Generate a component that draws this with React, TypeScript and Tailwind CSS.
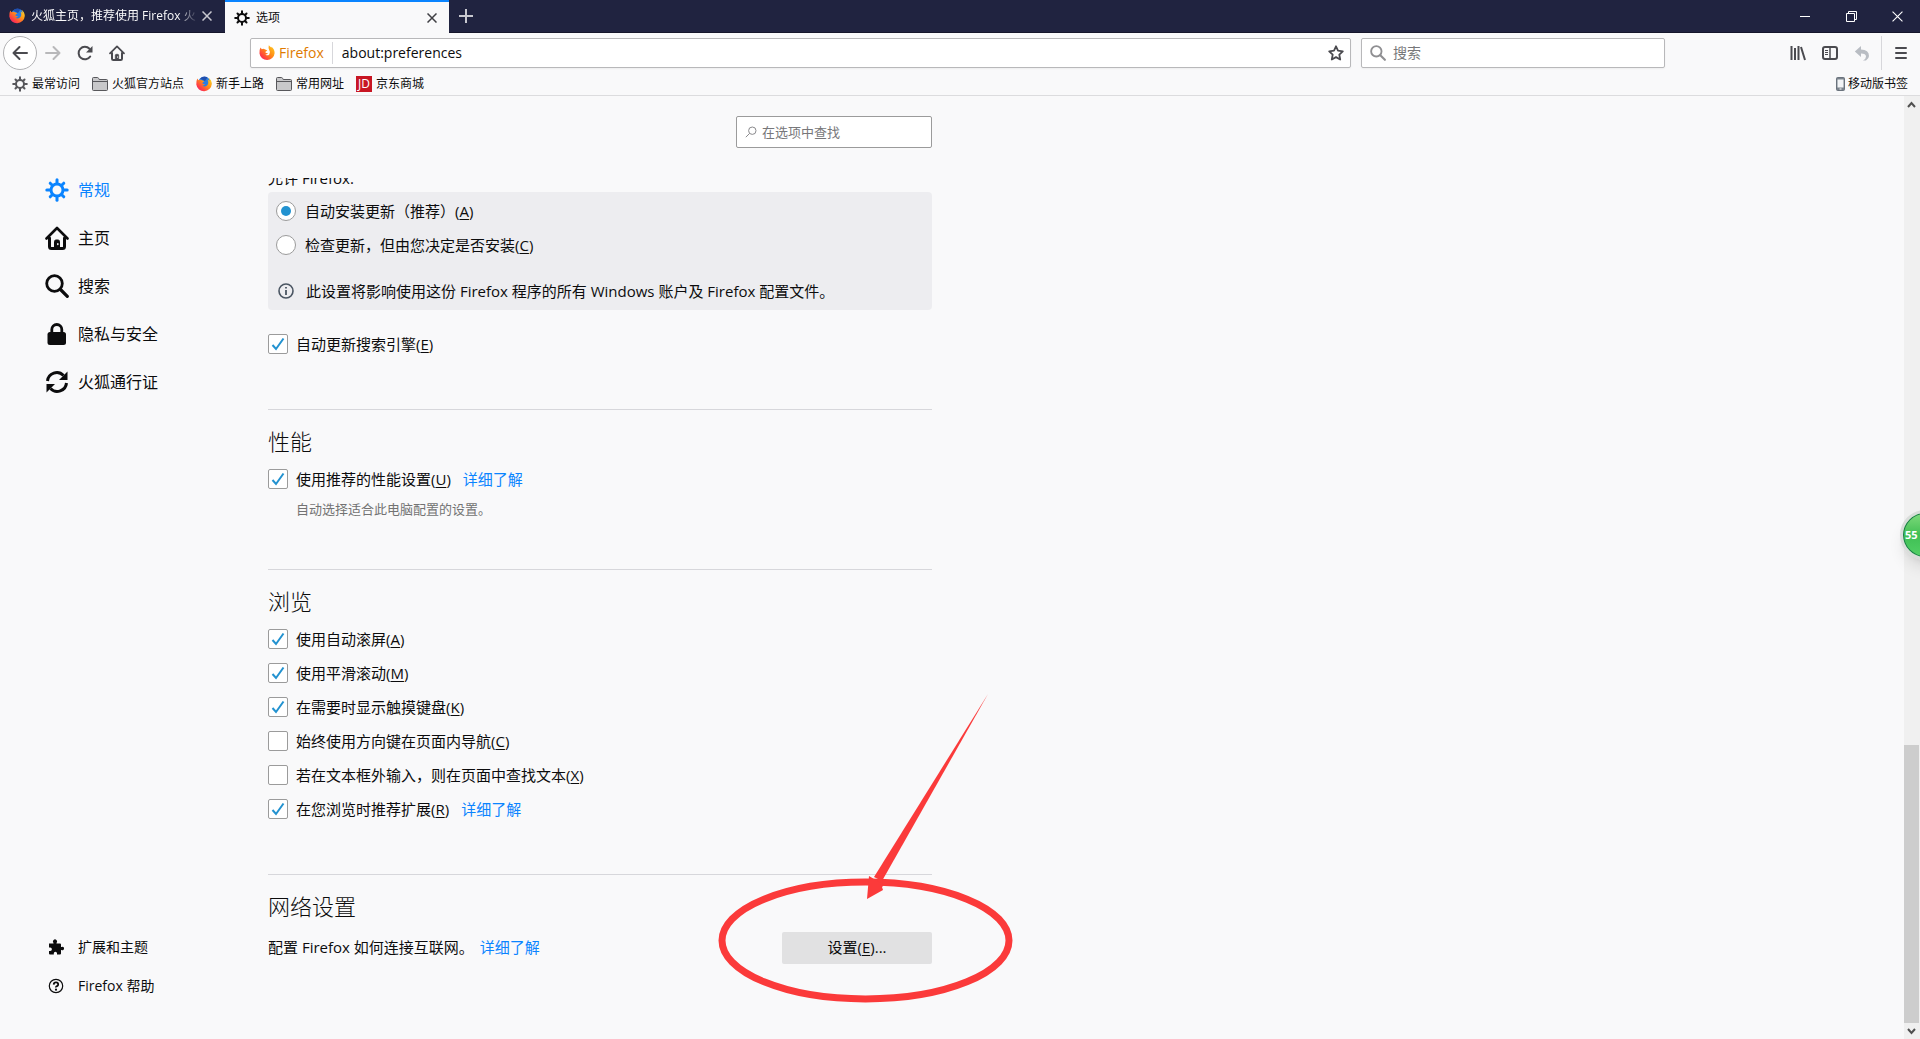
/**
 * Browser window - Preferences page
 */

import type { ReactNode } from 'react';

interface IconProps {
  className?: string;
}

interface OptionProps {
  label: string;
  accessKey: string;
  checked?: boolean;
  children?: ReactNode;
}

const GEAR_ANGLES = [0, 45, 90, 135, 180, 225, 270, 315];

function GearIcon({ className }: IconProps) {
  return (
    <svg viewBox="0 0 24 24" className={className} fill="none" stroke="currentColor" aria-hidden="true">
      <circle cx="12" cy="12" r="6" strokeWidth="3" />
      {GEAR_ANGLES.map((angle) => (
        <path
          key={angle}
          d={angle % 90 === 0 ? 'M12 5V1.8' : 'M12 5V2.4'}
          strokeWidth="3"
          strokeLinecap="round"
          transform={`rotate(${angle} 12 12)`}
        />
      ))}
    </svg>
  );
}

function HomeIcon({ className }: IconProps) {
  return (
    <svg viewBox="0 0 24 24" className={className} fill="none" stroke="currentColor" strokeLinecap="round" strokeLinejoin="round" aria-hidden="true">
      <path d="M1.5 12.5 12 2l10.500 10.500" strokeWidth="2.600" />
      <path d="M4.500 12v8.500q0 2 2 2h11q2 0 2-2V12" strokeWidth="3" />
      <path d="M9.500 21.500v-6q0-1.500 1.500-1.500h2q1.500 0 1.500 1.500v6" strokeWidth="1" fill="currentColor" />
      <path d="M12.800 17.800v.6" stroke="#f9f9fa" strokeWidth="1.500" />
    </svg>
  );
}

function SearchIcon({ className }: IconProps) {
  return (
    <svg viewBox="0 0 24 24" className={className} fill="none" stroke="currentColor" strokeLinecap="round" aria-hidden="true">
      <circle cx="9.500" cy="9.500" r="7.800" strokeWidth="2.800" />
      <path d="m15.500 15.500 6.800 6.800" strokeWidth="3.200" />
    </svg>
  );
}

function LockIcon({ className }: IconProps) {
  return (
    <svg viewBox="0 0 24 24" className={className} aria-hidden="true">
      <path d="M6.800 12V7.500a5 5 0 0 1 10 0V12" fill="none" stroke="currentColor" strokeWidth="2.800" />
      <rect x="2.500" y="10" width="18.500" height="13" rx="2.500" fill="currentColor" />
    </svg>
  );
}

function SyncIcon({ className }: IconProps) {
  return (
    <svg viewBox="0 0 24 24" className={className} fill="none" stroke="currentColor" strokeWidth="3" aria-hidden="true">
      <path d="M2.500 11a9.300 9.300 0 0 1 16-5.500" />
      <path d="M21.500 13a9.300 9.300 0 0 1-16 5.500" />
      <path d="M22.500 1.500V10H14z" fill="currentColor" stroke="none" />
      <path d="M1.500 22.500V14H10z" fill="currentColor" stroke="none" />
    </svg>
  );
}

function PuzzleIcon({ className }: IconProps) {
  return (
    <svg viewBox="0 0 16 16" className={className} fill="currentColor" aria-hidden="true">
      <path d="M1 4.500h4.500V3.800a2 2 0 1 1 3 0v.7H12q1 0 1 1V8h.6a1.700 1.700 0 1 1 0 3H13v3.500q0 1-1 1H9v-1.200a1.600 1.600 0 0 0-3.200 0v1.200H2q-1 0-1-1V12h1.200a1.700 1.700 0 0 0 0-3.400H1z" />
    </svg>
  );
}

function HelpIcon({ className }: IconProps) {
  return (
    <svg viewBox="0 0 16 16" className={className} fill="none" stroke="currentColor" aria-hidden="true">
      <circle cx="8" cy="8" r="6.700" strokeWidth="1.200" />
      <path d="M5.700 6.600Q5.800 4.400 8 4.400t2.200 2q0 1.100-1.200 1.700T8 9.500" strokeWidth="1.800" />
      <circle cx="8" cy="11.700" r="1.100" fill="currentColor" stroke="none" />
    </svg>
  );
}

function CloseIcon({ className }: IconProps) {
  return (
    <svg viewBox="0 0 10 10" className={className} fill="none" stroke="currentColor" aria-hidden="true">
      <path d="m.5.5 9 9m0-9-9 9" />
    </svg>
  );
}

function TabCloseIcon({ className }: IconProps) {
  return (
    <svg viewBox="0 0 10 10" className={className} fill="none" strokeWidth="1.500" aria-hidden="true">
      <path d="m.5.5 9 9m0-9-9 9" />
    </svg>
  );
}

function FolderIcon() {
  return (
    <svg viewBox="0 0 16 16" className="size-4" aria-hidden="true">
      <path d="M.5 13.500v-11q0-1 1-1h4q.8 0 1.200 1l.5 1h7.300q1 0 1 1v9q0 1-1 1h-13q-1 0-1-1z" fill="#c8c8ca" stroke="#57575b" />
      <path d="M1 5.500h14" stroke="#57575b" />
    </svg>
  );
}

function FirefoxLogo({ className }: IconProps) {
  return (
    <svg viewBox="0 0 16 16" className={className} aria-hidden="true">
      <defs>
        <linearGradient id="foxFlame" x1="1" y1="0" x2="0" y2="1">
          <stop offset="0" stopColor="#ffe226" />
          <stop offset=".4" stopColor="#ff9516" />
          <stop offset=".75" stopColor="#ff3b47" />
          <stop offset="1" stopColor="#e31587" />
        </linearGradient>
      </defs>
      <circle cx="8.500" cy="7.500" r="6.700" fill="#2a7de1" />
      <path d="M4 2.500Q7-.6 11.500 1.300L9 5z" fill="#204fae" />
      <path d="M1.300 2.500 2.500 4.300Q4.300 3.300 6 4.200L8.300 5.300 6.500 6.700Q6.300 8 7.300 8L9 8.200Q8 9.700 6.300 9.500 8.500 11.600 11 9.600 13.300 7.300 11.500 3.500 13 4.200 13.500 5.500 13.600 3.200 12.400 1.700 15.800 4 15.800 8A7.800 7.800 0 0 1 .3 8.500Q.1 5 1.300 2.500z" fill="url(#foxFlame)" />
    </svg>
  );
}

// Flat version used in the address bar identity box
function FirefoxMark({ className }: IconProps) {
  return (
    <svg viewBox="0 0 16 16" className={className} aria-hidden="true">
      <defs>
        <linearGradient id="foxMark" x1="1" y1="0" x2="0" y2="1">
          <stop offset="0" stopColor="#ffd21f" />
          <stop offset=".45" stopColor="#ff8a16" />
          <stop offset=".8" stopColor="#ff3647" />
          <stop offset="1" stopColor="#e31587" />
        </linearGradient>
      </defs>
      <path d="M1.500 2.500 2.800 4.200Q4.300 3.300 5.800 4.200L8.300 5.500 6.500 6.700Q6.300 8 7.300 8.100L9 8.300Q8 9.700 6.300 9.500 8.500 11.200 10.300 9.500 12 7.500 10.300 5.200 9 3.700 9.800.3 11 1.700 12.500 2.700 12.300 2 12.600 1.700 15.800 4.500 15.600 8.200A7.600 7.600 0 0 1 .5 8.500Q.1 5 1.500 2.500z" fill="url(#foxMark)" />
    </svg>
  );
}

function AccessKey({ label, accessKey }: { label: string; accessKey: string }) {
  return (
    <span>
      {label}(<span className="underline underline-offset-2">{accessKey}</span>)
    </span>
  );
}

function CheckOption({ label, accessKey, checked = false, children }: OptionProps) {
  return (
    <div className="flex h-5 items-center">
      <label className="flex items-center gap-2">
        <span className="grid size-5 place-items-center">
          <input
            type="checkbox"
            defaultChecked={checked}
            className="peer col-start-1 row-start-1 size-5 appearance-none rounded-xs border border-[#9b9b9b] bg-white"
          />
          <svg
            viewBox="0 0 20 20"
            className="pointer-events-none invisible col-start-1 row-start-1 size-5 peer-checked:visible"
            fill="none"
            stroke="#2292d0"
            strokeWidth="2"
            aria-hidden="true"
          >
            <path d="m4.500 11 3.500 4 7.500-10.500" />
          </svg>
        </span>
        <AccessKey label={label} accessKey={accessKey} />
      </label>
      {children}
    </div>
  );
}

function RadioOption({ label, accessKey, checked = false }: OptionProps) {
  return (
    <label className="flex h-5 items-center gap-[9px]">
      <span className="grid size-5 place-items-center">
        <input
          type="radio"
          name="updateMode"
          defaultChecked={checked}
          className="peer col-start-1 row-start-1 size-5 appearance-none rounded-full border border-[#9b9b9b] bg-white"
        />
        <span className="pointer-events-none invisible col-start-1 row-start-1 size-[10px] rounded-full bg-[#2292d0] peer-checked:visible" />
      </span>
      <AccessKey label={label} accessKey={accessKey} />
    </label>
  );
}

function LearnMore() {
  return (
    <a href="#learn-more" className="ml-3 text-[#0a84ff]">
      详细了解
    </a>
  );
}

function TitleBar() {
  return (
    <header className="flex h-[33px] shrink-0 border-b border-[#15162b] bg-[#202340] text-xs">
      <div className="flex w-[225px] items-center pr-[13px] pl-[9px] text-[#f9f9fa]">
        <FirefoxLogo className="size-4 shrink-0" />
        <span className="ml-[6px] flex-1 whitespace-nowrap [mask-image:linear-gradient(to_right,black_88%,transparent)]">
          火狐主页，推荐使用 Firefox 火
        </span>
        <button type="button" aria-label="关闭标签页" className="ml-1">
          <TabCloseIcon className="size-[10px] stroke-[#c8c8d0]" />
        </button>
      </div>
      <div className="-mb-px flex w-56 items-center border-t-2 border-[#0a84ff] bg-[#f9f9fa] pr-3 pl-[9px] text-[#0c0c0d]">
        <GearIcon className="size-4" />
        <span className="ml-[6px] flex-1">选项</span>
        <button type="button" aria-label="关闭标签页">
          <TabCloseIcon className="size-[10px] stroke-[#3f3f43]" />
        </button>
      </div>
      <button type="button" aria-label="新建标签页" className="grid w-[34px] place-items-center">
        <svg viewBox="0 0 14 14" className="size-[14px]" stroke="#c8c8d0" strokeWidth="2" aria-hidden="true">
          <path d="M7 0v14M0 7h14" />
        </svg>
      </button>
      <div className="ml-auto flex text-white">
        <button type="button" aria-label="最小化" className="grid w-[46px] place-items-center">
          <span className="h-px w-[10px] bg-white" />
        </button>
        <button type="button" aria-label="还原" className="grid w-[46px] place-items-center">
          <svg viewBox="0 0 11 11" className="size-[11px]" fill="none" stroke="currentColor" aria-hidden="true">
            <path d="M.5 2.500h8v8h-8zM2.500 2V.5h8v8H9" />
          </svg>
        </button>
        <button type="button" aria-label="关闭" className="grid w-[46px] place-items-center">
          <CloseIcon className="size-[11px]" />
        </button>
      </div>
    </header>
  );
}

function NavBar() {
  return (
    <div className="flex h-10 shrink-0 items-center text-[#4a4a4f]">
      <button type="button" aria-label="后退" className="ml-[3px] grid size-[34px] place-items-center rounded-full border border-[#b1b1b3] bg-white">
        <svg viewBox="0 0 16 16" className="size-4" fill="none" stroke="currentColor" strokeWidth="2" strokeLinecap="round" strokeLinejoin="round" aria-hidden="true">
          <path d="M15 8H1.500M7.500 2l-6 6 6 6" />
        </svg>
      </button>
      <button type="button" aria-label="前进" className="ml-2 grid size-4 place-items-center text-[#b8b8ba]">
        <svg viewBox="0 0 16 16" className="size-4" fill="none" stroke="currentColor" strokeWidth="2" strokeLinecap="round" strokeLinejoin="round" aria-hidden="true">
          <path d="M1 8h13.500M8.500 2l6 6-6 6" />
        </svg>
      </button>
      <button type="button" aria-label="刷新" className="ml-4">
        <svg viewBox="0 0 16 16" className="size-4" fill="none" stroke="currentColor" strokeWidth="2" strokeLinecap="round" aria-hidden="true">
          <path d="M13.200 11.500A6.300 6.300 0 1 1 12.500 3.700" />
          <path d="M15.500 1v6.500H9z" fill="currentColor" stroke="none" />
        </svg>
      </button>
      <button type="button" aria-label="主页" className="ml-4">
        <HomeIcon className="size-4" />
      </button>

      <div className="ml-[125px] flex h-[30px] flex-1 items-center rounded-xs border border-[#b8b8ba] bg-white shadow-xs">
        <FirefoxMark className="ml-2 size-4" />
        <span className="ml-1 text-sm text-[#e07b00]">Firefox</span>
        <span className="ml-2 h-[22px] w-px bg-[#d7d7db]" />
        <input
          type="text"
          aria-label="地址"
          defaultValue="about:preferences"
          className="ml-[9px] min-w-0 flex-1 bg-transparent text-sm text-[#0c0c0d] outline-none"
        />
        <button type="button" aria-label="添加书签" className="mr-[6px]">
          <svg viewBox="0 0 16 16" className="size-4" fill="none" stroke="currentColor" strokeWidth="1.800" strokeLinejoin="round" aria-hidden="true">
            <path d="m8 1.300 2 4.400 4.800.6-3.500 3.300.9 4.900L8 12.100l-4.200 2.400.9-4.900L1.200 6.300 6 5.700z" />
          </svg>
        </button>
      </div>

      <div className="ml-[10px] flex h-[30px] w-[304px] items-center rounded-xs border border-[#b8b8ba] bg-white shadow-xs">
        <SearchIcon className="ml-2 size-4 text-[#8f8f92]" />
        <input
          type="search"
          aria-label="搜索"
          placeholder="搜索"
          className="ml-[7px] min-w-0 flex-1 bg-transparent text-sm outline-none placeholder:text-[#77777a]"
        />
      </div>

      <button type="button" aria-label="书库" className="ml-[125px]">
        <svg viewBox="0 0 16 16" className="size-4" fill="none" stroke="currentColor" strokeWidth="2" aria-hidden="true">
          <path d="M1.500 1v14M5 3v12M8.500 1v14M11 2l4 13" />
        </svg>
      </button>
      <button type="button" aria-label="侧栏" className="ml-4">
        <svg viewBox="0 0 16 16" className="size-4" fill="none" stroke="currentColor" aria-hidden="true">
          <rect x="1" y="2" width="14" height="12" rx="2" strokeWidth="2" />
          <path d="M8 2v12" strokeWidth="1.500" />
          <path d="M3 5.500h3M3 7.500h3M3 9.500h3" />
        </svg>
      </button>
      <button type="button" aria-label="撤销" className="ml-4">
        <svg viewBox="0 0 16 16" className="size-4" fill="#b9bdc3" aria-hidden="true">
          <path d="M7 1v3.500q8 .3 8 6.500 0 2.500-3 4.500H9q3-1.500 3-4Q12 8.600 7 8.500V12L.8 6.500z" />
        </svg>
      </button>
      <span className="ml-[11px] h-[34px] w-px bg-[#d7d7db]" />
      <button type="button" aria-label="打开菜单" className="mr-3 ml-3">
        <svg viewBox="0 0 14 14" className="size-[14px]" stroke="currentColor" strokeWidth="2" strokeLinecap="round" aria-hidden="true">
          <path d="M2 2h10M2 7h10M2 12h10" />
        </svg>
      </button>
    </div>
  );
}

function BookmarksBar() {
  return (
    <div className="flex h-[23px] shrink-0 items-center border-b border-[#dcdcde] text-xs leading-4 text-[#0c0c0d]">
      <a href="#most-visited" className="ml-3 flex items-center gap-1">
        <GearIcon className="size-4 text-[#57575b]" />
        最常访问
      </a>
      <a href="#official" className="ml-3 flex items-center gap-1">
        <FolderIcon />
        火狐官方站点
      </a>
      <a href="#getting-started" className="ml-3 flex items-center gap-1">
        <FirefoxLogo className="size-4" />
        新手上路
      </a>
      <a href="#common" className="ml-3 flex items-center gap-1">
        <FolderIcon />
        常用网址
      </a>
      <a href="#jd" className="ml-3 flex items-center gap-1">
        <span className="grid size-4 place-items-center bg-[#c81623] text-xs leading-4 text-white">JD</span>
        京东商城
      </a>
      <a href="#mobile" className="mr-3 ml-auto flex items-center gap-[3px]">
        <svg viewBox="0 0 9 14" className="h-[14px] w-[9px]" aria-hidden="true">
          <rect x=".5" y=".5" width="8" height="13" rx="1" fill="#7b838c" stroke="#6a737d" />
          <path d="M1.500 2.500h6v8h-6z" fill="#f2f4f6" />
          <path d="M3.500 12h2" stroke="#fff" />
        </svg>
        移动版书签
      </a>
    </div>
  );
}

const categories = [
  { label: '常规', icon: GearIcon, active: true },
  { label: '主页', icon: HomeIcon, active: false },
  { label: '搜索', icon: SearchIcon, active: false },
  { label: '隐私与安全', icon: LockIcon, active: false },
  { label: '火狐通行证', icon: SyncIcon, active: false },
];

const footerLinks = [
  { label: '扩展和主题', icon: PuzzleIcon },
  { label: 'Firefox 帮助', icon: HelpIcon },
];

function Sidebar() {
  return (
    <nav className="flex w-[268px] shrink-0 flex-col pt-[70px] pb-[34px] pl-[45px]">
      {categories.map(({ label, icon: Icon, active }) => (
        <a
          key={label}
          href="#category"
          className={`flex h-12 items-center gap-[9px] text-base ${active ? 'text-[#0a84ff]' : 'text-[#0c0c0d]'}`}
        >
          <Icon className="size-6" />
          {label}
        </a>
      ))}
      <div className="mt-auto">
        {footerLinks.map(({ label, icon: Icon }) => (
          <a key={label} href="#support" className="flex h-[39px] items-center gap-[14px] pl-[3px] text-sm">
            <Icon className="size-4" />
            {label}
          </a>
        ))}
      </div>
    </nav>
  );
}

function Section({ title, children }: { title: string; children: ReactNode }) {
  return (
    <section className="border-t border-[#d7d7db] pt-[17px]">
      <h2 className="mb-3 text-[22px] leading-7 font-light">{title}</h2>
      {children}
    </section>
  );
}

// Hand-drawn marker around the settings button
function Highlight() {
  return (
    <svg
      viewBox="0 0 300 320"
      className="pointer-events-none absolute -right-[83px] bottom-[29px] z-10 h-[320px] w-[300px]"
      fill="none"
      aria-hidden="true"
    >
      <ellipse cx="150.500" cy="250.500" rx="143.500" ry="58.500" stroke="#fb3a3a" strokeWidth="7" />
      <path d="M273 4 167 191l-8-4z" fill="#fb3a3a" />
      <path d="m152 209 2-23 15 9-2 2 1 3z" fill="#fb3a3a" />
    </svg>
  );
}

function Preferences() {
  return (
    <main className="relative flex w-[664px] flex-col">
      <div className="mt-5 mb-[30px] ml-auto flex h-8 w-[196px] shrink-0 items-center rounded-xs border border-[#9b9b9b] bg-white pl-2">
        <svg viewBox="0 0 12 12" className="size-3" fill="none" stroke="#8a8a8d" aria-hidden="true">
          <circle cx="7.300" cy="4.700" r="3.700" />
          <path d="M4.600 7.400.8 11.200" />
        </svg>
        <input
          type="search"
          aria-label="在选项中查找"
          placeholder="在选项中查找"
          className="ml-[5px] min-w-0 flex-1 bg-transparent text-[13px] outline-none placeholder:text-[#77777a]"
        />
      </div>

      {/* Scrolled to the end, so the upper part is cut off */}
      <div className="flex min-h-0 flex-1 flex-col justify-end overflow-hidden pb-[75px]">
        <p className="mb-[3px] leading-[21px]">允许 Firefox:</p>
        <div className="mb-6 flex flex-col gap-[14px] rounded-sm bg-[#ededf0] px-2 py-[9px]">
          <RadioOption label="自动安装更新（推荐）" accessKey="A" checked />
          <RadioOption label="检查更新，但由您决定是否安装" accessKey="C" />
          <p className="mt-3 flex h-5 items-center gap-3 pl-[2px]">
            <svg viewBox="0 0 16 16" className="size-4" fill="none" stroke="#4a5562" aria-hidden="true">
              <circle cx="8" cy="8" r="7" strokeWidth="1.600" />
              <path d="M8 7v5M8 4v1.500" strokeWidth="1.800" />
            </svg>
            此设置将影响使用这份 Firefox 程序的所有 Windows 账户及 Firefox 配置文件。
          </p>
        </div>
        <div className="mb-[55px]">
          <CheckOption label="自动更新搜索引擎" accessKey="E" checked />
        </div>

        <Section title="性能">
          <div className="pt-[2px] pb-[50px]">
            <CheckOption label="使用推荐的性能设置" accessKey="U" checked>
              <LearnMore />
            </CheckOption>
            <p className="mt-[10px] pl-7 text-[13px] text-[#737373]">自动选择适合此电脑配置的设置。</p>
          </div>
        </Section>

        <Section title="浏览">
          <div className="flex flex-col gap-[14px] pt-[2px] pb-[55px]">
            <CheckOption label="使用自动滚屏" accessKey="A" checked />
            <CheckOption label="使用平滑滚动" accessKey="M" checked />
            <CheckOption label="在需要时显示触摸键盘" accessKey="K" checked />
            <CheckOption label="始终使用方向键在页面内导航" accessKey="C" />
            <CheckOption label="若在文本框外输入，则在页面中查找文本" accessKey="X" />
            <CheckOption label="在您浏览时推荐扩展" accessKey="R" checked>
              <LearnMore />
            </CheckOption>
          </div>
        </Section>

        <Section title="网络设置">
          <div className="flex items-start justify-between">
            <p className="pt-[5px]">
              配置 Firefox 如何连接互联网。
              <a href="#learn-more" className="ml-[6px] text-[#0a84ff]">
                详细了解
              </a>
            </p>
            <button type="button" className="h-8 w-[150px] rounded-xs bg-[#e1e1e2] pb-[2px]">
              设置(<span className="underline underline-offset-2">E</span>)...
            </button>
          </div>
        </Section>
      </div>
      <Highlight />
    </main>
  );
}

function Scrollbar() {
  return (
    <div className="ml-auto flex w-4 flex-col items-center bg-[#f0f0f0] text-[#505050]" aria-hidden="true">
      <svg viewBox="0 0 16 17" className="h-[17px] w-4" fill="none" stroke="currentColor" strokeWidth="2">
        <path d="m4 11 3.500-4 3.500 4" />
      </svg>
      <div className="mt-auto h-[278px] w-full border-r border-[#f0f0f0] bg-[#cdcdcd]" />
      <svg viewBox="0 0 16 16" className="size-4" fill="none" stroke="currentColor" strokeWidth="2">
        <path d="m4 6 3.500 4L11 6" />
      </svg>
    </div>
  );
}

export default function App() {
  return (
    <div className="relative flex h-screen flex-col overflow-hidden bg-[#f9f9fa] font-['Open_Sans','Noto_Sans_CJK_SC',sans-serif] text-[15px] leading-5 text-[#0c0c0d]">
      <TitleBar />
      <NavBar />
      <BookmarksBar />
      <div className="flex min-h-0 flex-1">
        <Sidebar />
        <Preferences />
        <Scrollbar />
      </div>
      <div className="absolute top-[510px] -right-[30px] flex size-[50px] items-center rounded-full border-3 border-[#d9dcda] bg-linear-to-b from-[#7edb7c] via-[#3fbf54] to-[#52d066] pl-[2px] text-[11px] font-bold text-white shadow-lg inset-ring inset-ring-[#1b7a4a]">
        55
      </div>
    </div>
  );
}
